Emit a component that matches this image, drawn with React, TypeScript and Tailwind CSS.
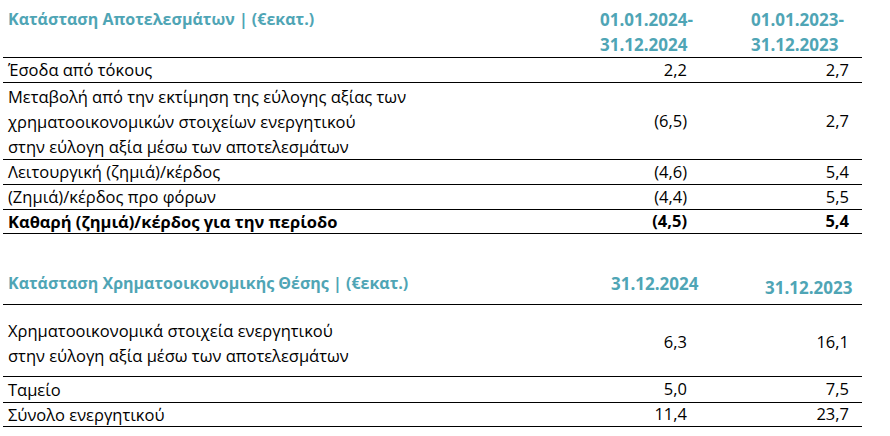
const FONT = "font-['Open_Sans',sans-serif]";

type Row = {
  label: string[];
  a: string;
  b: string;
  bold?: boolean;
  h: string;
  pad?: string;
};

// heights include the 1px top border
const INCOME: Row[] = [
  { label: ["Έσοδα από τόκους"], a: "2,2", b: "2,7", h: "h-[25px]" },
  {
    label: [
      "Μεταβολή από την εκτίμηση της εύλογης αξίας των",
      "χρηματοοικονομικών στοιχείων ενεργητικού",
      "στην εύλογη αξία μέσω των αποτελεσμάτων",
    ],
    a: "(6,5)",
    b: "2,7",
    h: "h-[77px]",
  },
  { label: ["Λειτουργική (ζημιά)/κέρδος"], a: "(4,6)", b: "5,4", h: "h-[25px]" },
  { label: ["(Ζημιά)/κέρδος προ φόρων"], a: "(4,4)", b: "5,5", h: "h-[25px]" },
  {
    label: ["Καθαρή (ζημιά)/κέρδος για την περίοδο"],
    a: "(4,5)",
    b: "5,4",
    bold: true,
    h: "h-[24px]",
  },
];

const BALANCE: Row[] = [
  {
    label: [
      "Χρηματοοικονομικά στοιχεία ενεργητικού",
      "στην εύλογη αξία μέσω των αποτελεσμάτων",
    ],
    a: "6,3",
    b: "16,1",
    h: "h-[72px]",
    pad: "pt-[4px]",
  },
  { label: ["Ταμείο"], a: "5,0", b: "7,5", h: "h-[26px]" },
  { label: ["Σύνολο ενεργητικού"], a: "11,4", b: "23,7", h: "h-[24px]" },
];

function TableRow({ row }: { row: Row }) {
  const weight = row.bold ? "font-bold" : "font-normal";
  return (
    <div className={`flex border-t border-black ${row.h} ${weight}`}>
      <div className={`flex flex-1 flex-col justify-center pl-[5px] ${row.pad ?? ""}`}>
        {row.label.map((l) => (
          <div key={l} className={row.label.length > 1 ? "leading-[25px]" : "leading-[24px]"}>
            {l}
          </div>
        ))}
      </div>
      <div className={`flex w-[162px] items-center justify-end ${row.pad ?? ""}`}>{row.a}</div>
      <div className={`flex w-[175px] items-center justify-end pr-[13px] ${row.pad ?? ""}`}>{row.b}</div>
    </div>
  );
}

export default function App() {
  return (
    <div className={`h-[436px] w-[890px] bg-white text-[16.5px] text-black ${FONT}`}>
      <div className="ml-[3px] w-[859px]">
        {/* Income statement */}
        <div className="flex h-[57px] pt-[7px] font-bold leading-[25px] text-[#4fa5b5]">
          <div className="flex-1 pl-[5px] text-[16px]">Κατάσταση Αποτελεσμάτων | (€εκατ.)</div>
          <div className="w-[162px] pl-[75px] text-[17px]">
            <div>01.01.2024-</div>
            <div>31.12.2024</div>
          </div>
          <div className="w-[175px] pl-[64px] text-[17px]">
            <div>01.01.2023-</div>
            <div>31.12.2023</div>
          </div>
        </div>
        {INCOME.map((r) => (
          <TableRow key={r.label[0]} row={r} />
        ))}

        {/* Financial position */}
        <div className="flex h-[71px] border-t border-black pt-[37px] font-bold leading-[25px] text-[#4fa5b5]">
          <div className="flex-1 pl-[5px] text-[16px]">Κατάσταση Χρηματοοικονομικής Θέσης | (€εκατ.)</div>
          <div className="w-[162px] pl-[86px] text-[17px]">31.12.2024</div>
          <div className="w-[175px] pl-[78px] pt-[4px] text-[17px]">31.12.2023</div>
        </div>
        {BALANCE.map((r) => (
          <TableRow key={r.label[0]} row={r} />
        ))}
        <div className="border-t border-black" />
      </div>
    </div>
  );
}
